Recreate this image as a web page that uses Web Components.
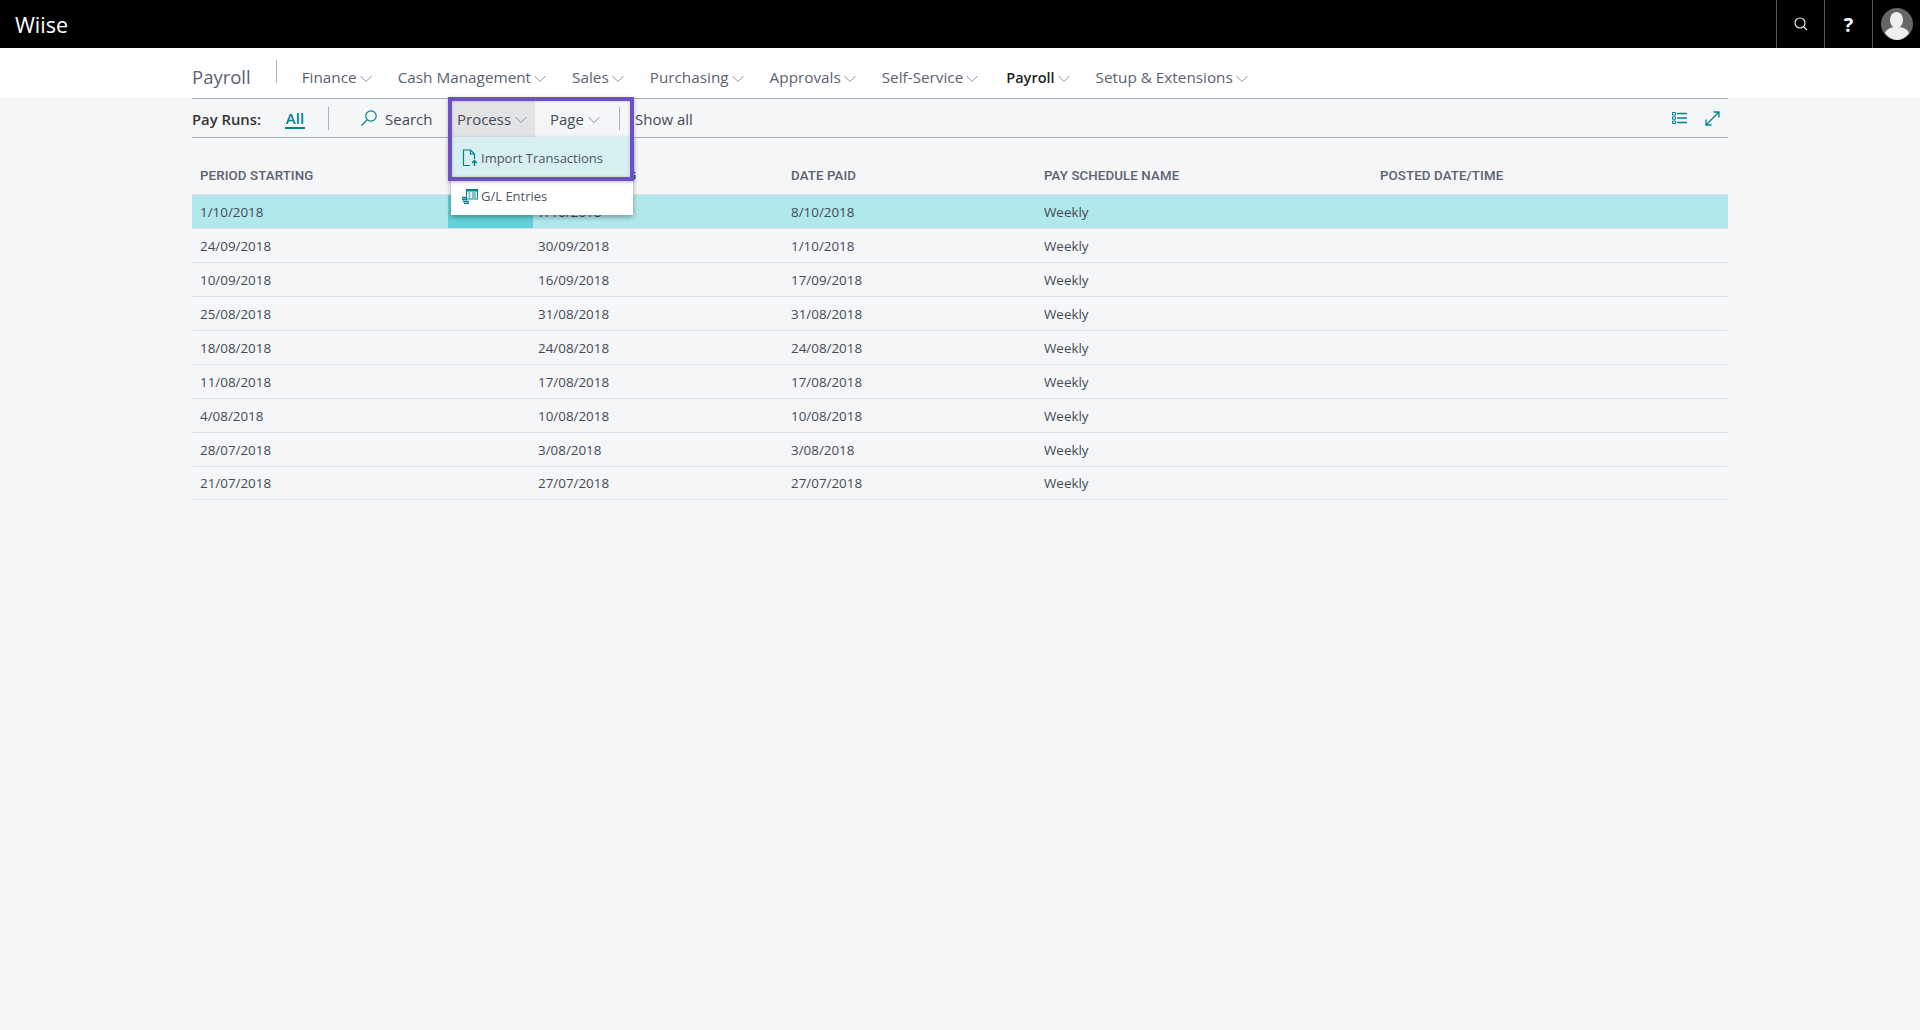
<!DOCTYPE html>
<html>
<head>
<meta charset="utf-8">
<title>Pay Runs</title>
<style>
  html, body { margin: 0; height: 100%; background: #f5f6f8; }
  body { font-family: "Open Sans", "Noto Sans", sans-serif; overflow: hidden; }
</style>
</head>
<body>
<wiise-topbar></wiise-topbar>
<wiise-nav></wiise-nav>
<wiise-page>
  <wiise-toolbar></wiise-toolbar>
  <pay-table></pay-table>
</wiise-page>

<script>
const CHEVRON = `<svg class="chev" width="12" height="7" viewBox="0 0 12 7" aria-hidden="true"><path d="M.5 1l5.500 5.500L11.500 1" fill="none" stroke="#8a8f9a" stroke-width="1"/></svg>`

class WiiseTopbar extends HTMLElement {
  constructor () {
    super()
    this.attachShadow({ mode: 'open' })
    this.shadowRoot.innerHTML = /* html */`
      <style>
        :host { display: flex; height: 48px; background: #000; color: #fff; align-items: center; }
        .logo { font-size: 21.500px; padding-left: 15px; flex: 1; }
        .btn { width: 47px; height: 48px; border-left: 1px solid #555; display: flex; align-items: center; justify-content: center; }
        .btn.help { font: bold 20px "Open Sans", sans-serif; }
      </style>
      <div class="logo">Wiise</div>
      <div class="btn"><svg width="16" height="16" viewBox="0 0 16 16"><circle cx="7" cy="7" r="5" fill="none" stroke="#e8eef5" stroke-width="1.2"/><path d="M10.600 10.600l3.400 3.400" stroke="#e8eef5" stroke-width="1.2"/></svg></div>
      <div class="btn help">?</div>
      <div class="btn"><svg width="34" height="34" viewBox="0 0 34 34"><circle cx="17" cy="17" r="16" fill="#666"/><ellipse cx="16.500" cy="13" rx="6.500" ry="8" fill="#eee"/><path d="M5 26c2-5 7-6 12-6s10 1 12 6c-3 4-7 7-12 7S8 30 5 26z" fill="#eee"/></svg></div>
    `
  }
}

class WiiseNav extends HTMLElement {
  constructor () {
    super()
    this.attachShadow({ mode: 'open' })
    const items = ['Finance', 'Cash Management', 'Sales', 'Purchasing', 'Approvals', 'Self-Service', 'Payroll', 'Setup & Extensions']
    const links = items.map(t => `<span class="item${t === 'Payroll' ? ' on' : ''}">${t}${CHEVRON}</span>`).join('')
    this.shadowRoot.innerHTML = /* html */`
      <style>
        :host { display: flex; height: 50px; background: #fff; padding-left: 192px; align-items: center; color: #5b6270; }
        .title { font-size: 18.500px; line-height: 24px; padding: 8px 26px 0 0; margin-right: 25px; position: relative; }
        .title::after { content: ""; position: absolute; right: 0; top: 3px; height: 23px; width: 1px; background: #aab0ba; }
        .items { display: flex; gap: 26px; font-size: 15.300px; padding-top: 7px; }
        .item { display: flex; align-items: center; gap: 3px; white-space: nowrap; }
        .on { color: #222; font-weight: 600; font-size: 14.500px; margin-left: 2px; padding-top: 1px; }
        .chev { margin-top: 3px; }
      </style>
      <div class="title">Payroll</div>
      <div class="items">${links}</div>
    `
  }
}

class WiisePage extends HTMLElement {
  constructor () {
    super()
    this.attachShadow({ mode: 'open' })
    this.shadowRoot.innerHTML = /* html */`
      <style>
        :host { display: block; margin: 0 192px; }
      </style>
      <slot></slot>
    `
  }
}

class WiiseToolbar extends HTMLElement {
  constructor () {
    super()
    this.attachShadow({ mode: 'open' })
    this.shadowRoot.innerHTML = /* html */`
      <style>
        :host { display: flex; height: 38px; align-items: center; border-top: 1px solid #a8afbb; border-bottom: 1px solid #a8afbb; font-size: 15px; color: #444a55; position: relative; }
        .label { font-weight: 600; font-size: 14.800px; color: #333; width: 93px; flex: none; padding-top: 2px; }
        .all { color: #00838a; font-weight: 600; font-size: 15px; border-bottom: 2px solid #00838a; line-height: 18px; margin-top: 1px; width: 20px; flex: none; text-align: center; }
        .sep { width: 1px; height: 23px; background: #aab0ba; flex: none; }
        .sep.a { margin: 0 31px 0 23px; }
        .search { display: flex; align-items: center; gap: 7px; width: 88px; flex: none; padding-top: 2px; box-sizing: border-box; }
        .search svg { margin-top: -2px; }
        .btn { display: flex; align-items: center; gap: 4px; height: 38px; box-sizing: border-box; flex: none; padding-top: 2px; }
        .process { width: 87px; padding-left: 9px; background: #e2e3e5; }
        .page { width: 84px; padding-left: 15px; }
        .sep.b { margin-right: 15px; }
        .show { padding-top: 2px; }
        .right { margin-left: auto; display: flex; gap: 18px; align-items: center; padding-right: 8px; }
        wiise-menu { position: absolute; left: 259px; top: 38px; z-index: 3; }
        .mark { position: absolute; left: 256px; top: -2px; width: 186px; height: 84px; box-sizing: border-box; border: 4px solid #6d4fc9; z-index: 4; pointer-events: none; box-shadow: 0 1px 4px rgba(0,0,0,.25), inset 0 0 3px rgba(0,0,0,.2); }
      </style>
      <span class="label">Pay Runs:</span>
      <span class="all">All</span>
      <span class="sep a"></span>
      <span class="search">
        <svg width="18" height="18" viewBox="0 0 18 18"><circle cx="11" cy="7" r="5.200" fill="none" stroke="#00838a" stroke-width="1.2"/><path d="M7.200 10.800L1.500 16.500" stroke="#00838a" stroke-width="1.2"/></svg>
        Search
      </span>
      <span class="btn process">Process${CHEVRON}</span>
      <span class="btn page">Page${CHEVRON}</span>
      <span class="sep b"></span>
      <span class="show">Show all</span>
      <span class="right">
        <svg width="15" height="12" viewBox="0 0 15 12" fill="none" stroke="#00838a"><path d="M5 1.500h10M5 6h10M5 10.500h10" stroke-width="1.300"/><path d="M.5.500h3v2.500h-3zM.5 4.800h3v2.500h-3zM.5 9h3v2.500h-3z" stroke-width="1"/></svg>
        <svg width="15" height="15" viewBox="0 0 15 15" fill="none" stroke="#00838a" stroke-width="1.300"><path d="M1.500 13.500l12-12M8.500 1h5.500v5.500M1 8.500V14h5.500"/></svg>
      </span>
      <wiise-menu></wiise-menu>
      <span class="mark"></span>
    `
  }
}

class WiiseMenu extends HTMLElement {
  constructor () {
    super()
    this.attachShadow({ mode: 'open' })
    this.shadowRoot.innerHTML = /* html */`
      <style>
        :host { display: block; width: 182px; background: #fff; box-shadow: 0 2px 5px rgba(0,0,0,.35); font-size: 13px; color: #505662; }
        .row { display: flex; align-items: center; gap: 3px; padding-left: 11px; box-sizing: border-box; white-space: nowrap; }
        .row.hi { height: 42px; background: #d6eff1; }
        .row.plain { height: 36px; padding-bottom: 3px; }
      </style>
      <div class="row hi">
        <svg width="16" height="18" viewBox="0 0 16 18" fill="none" stroke="#00838a" stroke-width="1.2"><path d="M8 16.500H1.500V1h7l4 4v5M8.500 1v4h4"/><path d="M12.500 17v-5M10.200 14l2.300-2.500 2.300 2.500" stroke-width="1.500"/></svg>
        Import Transactions
      </div>
      <div class="row plain">
        <svg width="16" height="16" viewBox="0 0 16 16" fill="none" stroke="#00838a" stroke-width="1"><rect x="4.500" y="1.500" width="11" height="9.500"/><path d="M4.500 2.500h11" stroke-width="2"/><path d="M6.500 5h2M6.500 7h2M6.500 9h2M10 5h4M10 7h4M10 9h4"/><path d="M0 9.500h4M0 11.500h5M1 13.500h6M2 15.500h5" stroke-width="1.300"/></svg>
        G/L Entries
      </div>
    `
  }
}

class PayTable extends HTMLElement {
  constructor () {
    super()
    this.attachShadow({ mode: 'open' })
    const rows = [
      ['1/10/2018', '7/10/2018', '8/10/2018'],
      ['24/09/2018', '30/09/2018', '1/10/2018'],
      ['10/09/2018', '16/09/2018', '17/09/2018'],
      ['25/08/2018', '31/08/2018', '31/08/2018'],
      ['18/08/2018', '24/08/2018', '24/08/2018'],
      ['11/08/2018', '17/08/2018', '17/08/2018'],
      ['4/08/2018', '10/08/2018', '10/08/2018'],
      ['28/07/2018', '3/08/2018', '3/08/2018'],
      ['21/07/2018', '27/07/2018', '27/07/2018']
    ]
    const body = rows.map((r, i) => `
      <div class="row${i === 0 ? ' sel' : ''}">
        <span>${r[0]}</span><span>${r[1]}</span><span>${r[2]}</span><span>Weekly</span><span></span>
      </div>`).join('')
    this.shadowRoot.innerHTML = /* html */`
      <style>
        :host { display: block; padding-top: 18px; font-size: 13.400px; color: #444a55; position: relative; }
        .row, .head { display: grid; grid-template-columns: 338px 253px 253px 336px 1fr; }
        .row span, .head span { padding-left: 8px; white-space: nowrap; }
        .head { height: 38px; align-items: center; font: 500 13.300px Roboto, sans-serif; letter-spacing: .1px; color: #5b6270; border-bottom: 1px solid #dcdfe4; }
        .row { height: 33px; align-items: center; border-bottom: 1px solid #dcdfe4; }
        .row:last-child { height: 32px; }
        .row.sel { background: #b1e8eb; position: relative; }
        .row.sel::before { content: ""; position: absolute; left: 256px; top: 0; bottom: 0; width: 85px; background: #62d2da; }
        .row.sel span { position: relative; }
      </style>
      <div class="head">
        <span>PERIOD STARTING</span><span>PERIOD ENDING</span><span>DATE PAID</span><span>PAY SCHEDULE NAME</span><span>POSTED DATE/TIME</span>
      </div>
      ${body}
    `
  }
}

customElements.define('wiise-topbar', WiiseTopbar)
customElements.define('wiise-nav', WiiseNav)
customElements.define('wiise-page', WiisePage)
customElements.define('wiise-menu', WiiseMenu)
customElements.define('wiise-toolbar', WiiseToolbar)
customElements.define('pay-table', PayTable)
</script>
</body>
</html>
